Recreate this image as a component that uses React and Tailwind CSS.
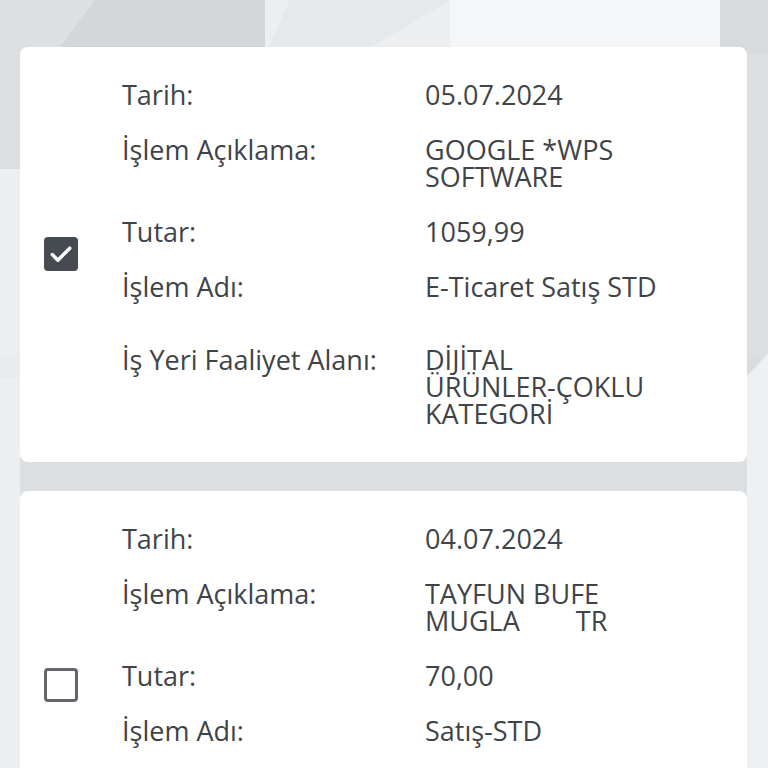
import { useState } from 'react';

const islemler = [
  {
    id: 1,
    tarih: '05.07.2024',
    aciklama: 'GOOGLE *WPS SOFTWARE',
    tutar: '1059,99',
    islemAdi: 'E-Ticaret Satış STD',
    faaliyet: (
      <>
        DİJİTAL <span className="whitespace-nowrap">ÜRÜNLER-ÇOKLU</span> KATEGORİ
      </>
    ),
    secili: true,
  },
  {
    id: 2,
    tarih: '04.07.2024',
    aciklama: 'TAYFUN BUFE MUGLA        TR',
    tutar: '70,00',
    islemAdi: 'Satış-STD',
    faaliyet: 'RESTORAN VE KAFE HİZMETLERİ',
    secili: false,
  },
];

// arka plandaki gri geometrik desen
const ArkaPlan = () => (
  <svg className="absolute inset-0 w-full h-full" viewBox="0 0 768 1000" preserveAspectRatio="none">
    <rect width="768" height="1000" fill="#dcdfe2" />
    <polygon points="0,0 95,0 55,70 0,70" fill="#dde0e3" />
    <polygon points="95,0 265,0 265,70 55,70" fill="#d3d7da" />
    <polygon points="265,0 450,0 450,70 265,70" fill="#eceef0" />
    <polygon points="290,0 450,0 360,70 265,70" fill="#e6e9eb" />
    <polygon points="450,0 720,0 720,70 450,70" fill="#f5f6f7" />
    <polygon points="720,0 768,0 768,70 720,70" fill="#d8dbde" />
    <polygon points="0,220 20,220 20,470 0,470" fill="#eceef0" />
    <polygon points="0,463 150,463 150,492 0,492" fill="#e9ebed" />
    <polygon points="150,463 300,463 300,492 150,492" fill="#f3f4f6" />
    <polygon points="300,463 470,463 470,492 300,492" fill="#e4e6e9" />
    <polygon points="470,463 768,463 768,492 470,492" fill="#dadde0" />
    <polygon points="0,492 20,492 20,1000 0,1000" fill="#eceef0" />
    <polygon points="747,490 768,460 768,1000 747,1000" fill="#eef0f2" />
  </svg>
);

const Satir = ({ etiket, deger, className = '' }) => (
  <div className={`flex ${className}`}>
    <div className="w-[303px] shrink-0">{etiket}</div>
    <div className="w-[240px] whitespace-pre-wrap">{deger}</div>
  </div>
);

const Kutucuk = ({ secili, onClick }) => (
  <button
    type="button"
    onClick={onClick}
    className={`w-[34px] h-[34px] shrink-0 rounded-[4px] flex items-center justify-center ${
      secili ? 'bg-[#454b50]' : 'border-[3px] border-[#63676b] bg-white'
    }`}
  >
    {secili && (
      <svg width="28" height="28" viewBox="0 0 24 24" fill="none">
        <path d="M4.5 12.5l4.8 4.8L19.5 7" stroke="white" strokeWidth="3" strokeLinecap="round" strokeLinejoin="round" />
      </svg>
    )}
  </button>
);

const IslemKarti = ({ islem, onToggle }) => (
  <div className="bg-white rounded-[8px] pl-6 pt-[34px] pb-[35px] flex items-center gap-[44px]">
    <Kutucuk secili={islem.secili} onClick={onToggle} />
    <div className="flex flex-col gap-7 text-[27px] leading-[27px] font-medium text-[#3f4448]">
      <Satir etiket="Tarih:" deger={islem.tarih} />
      <Satir etiket="İşlem Açıklama:" deger={islem.aciklama} />
      <Satir etiket="Tutar:" deger={islem.tutar} />
      <Satir etiket="İşlem Adı:" deger={islem.islemAdi} className="mb-[18px]" />
      <Satir etiket="İş Yeri Faaliyet Alanı:" deger={islem.faaliyet} />
    </div>
  </div>
);

export default function App() {
  const [liste, setListe] = useState(islemler);

  const toggle = (id) => {
    setListe(liste.map((i) => (i.id === id ? { ...i, secili: !i.secili } : i)));
  };

  return (
    <div className="relative w-[768px] h-[768px] overflow-hidden font-['Open_Sans',sans-serif]">
      <ArkaPlan />
      <div className="relative flex flex-col gap-[29px] pt-[47px] pl-5 pr-[21px]">
        {liste.map((islem) => (
          <IslemKarti key={islem.id} islem={islem} onToggle={() => toggle(islem.id)} />
        ))}
      </div>
    </div>
  );
}
